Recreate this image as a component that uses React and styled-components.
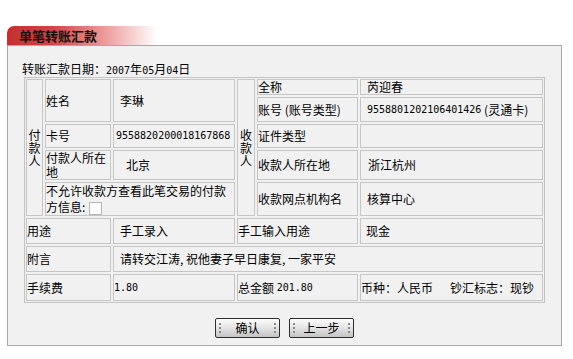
import React from "react";
import styled, { createGlobalStyle } from "styled-components";

const GlobalStyle = createGlobalStyle`
  body {
    margin: 0;
    background: #ffffff;
    font-family: "Noto Sans CJK SC", "Liberation Sans", sans-serif;
    font-size: 12px;
    color: #000;
  }
`;

const Page = styled.div`
  width: 555px;
  padding: 26px 0 0 7px;
`;

const Tab = styled.div`
  width: 150px;
  height: 19px;
  box-sizing: border-box;
  padding-left: 12px;
  border-top-left-radius: 7px;
  background: linear-gradient(90deg, #c62f2f 0%, #d54343 30%, #ec9a9a 65%, #ffffff 100%);
  font-size: 13px;
  font-weight: bold;
  line-height: 19px;
  color: #111;
`;

const Panel = styled.div`
  height: 301px;
  box-sizing: border-box;
  border: 1px solid #a9a9a9;
  background: #f1f1f1;
  padding: 15px 0 6px 0;
`;

const DateLine = styled.div`
  height: 16px;
  line-height: 16px;
  padding-left: 14px;
`;

const Num = styled.span`
  font-family: "DejaVu Sans Mono", "Liberation Mono", monospace;
  font-size: 10px;
`;

const Table = styled.div`
  display: grid;
  width: fit-content;
  margin-left: 16px;
  border: 1px solid #c3c3c3;
  padding: 1px;
  gap: 2px;
  grid-template-columns: 17px 66px 122px 18px 101px 183px;
  grid-template-rows: 16px 25px 24px 30px 34px 26px 26px 27px;
`;

const Cell = styled.div`
  grid-column: ${({ $col }) => $col};
  grid-row: ${({ $row }) => $row || "auto"};
  box-sizing: border-box;
  border: 1px solid #c6c6c6;
  display: flex;
  align-items: center;
  padding: 0 0 0 ${({ $pad }) => ($pad === undefined ? 0 : $pad)}px;
  line-height: 14px;
  white-space: ${({ $nowrap }) => ($nowrap ? "nowrap" : "normal")};
  overflow: hidden;
`;

const SideLabel = styled(Cell)`
  justify-content: center;
  text-align: center;
  padding: 0;
  line-height: 13px;
`;

const Notice = styled(Cell)`
  line-height: 16px;
`;

const Check = styled.span`
  display: inline-block;
  width: 13px;
  height: 13px;
  box-sizing: border-box;
  margin-left: 4px;
  vertical-align: -3px;
  background: #fff;
  border: 1px solid #b4b4b4;
`;

const Spacer = styled.span`
  display: inline-block;
  width: ${({ $w }) => $w}px;
`;

const ButtonRow = styled.div`
  display: flex;
  justify-content: center;
  gap: 9px;
  margin-top: 15px;
`;

const Button = styled.button`
  position: relative;
  width: 65px;
  height: 20px;
  padding: 0;
  border: 1px solid #2e2e2e;
  border-radius: 2px;
  background: linear-gradient(#fdfdfd 0%, #e6e6e6 45%, #c4c4c4 100%);
  font-family: "Noto Sans CJK SC", sans-serif;
  font-size: 12px;
  line-height: 18px;
  color: #000;

  &::before,
  &::after {
    content: "";
    position: absolute;
    top: 4px;
    width: 2px;
    height: 10px;
    background: repeating-linear-gradient(#8a8a8a 0 2px, transparent 2px 4px);
  }
  &::before { left: 3px; }
  &::after { right: 3px; }
`;

const App = () => {
  return (
    <>
      <GlobalStyle />
      <Page>
        <Tab>单笔转账汇款</Tab>
        <Panel>
          <DateLine>
            转账汇款日期：<Num>2007</Num>年<Num>05</Num>月<Num>04</Num>日
          </DateLine>
          <Table>
            <SideLabel $col="1" $row="1 / 6">付款人</SideLabel>
            <Cell $col="2" $row="1 / 3">姓名</Cell>
            <Cell $col="3" $row="1 / 3" $pad={6}>李琳</Cell>
            <SideLabel $col="4" $row="1 / 6">收款人</SideLabel>
            <Cell $col="5" $row="1">全称</Cell>
            <Cell $col="6" $row="1" $pad={6}>芮迎春</Cell>
            <Cell $col="5" $row="2" $nowrap>
              账号 (账号类型)
            </Cell>
            <Cell $col="6" $row="2" $pad={6} $nowrap>
              <Num>9558801202106401426</Num>&nbsp;(灵通卡)
            </Cell>

            <Cell $col="2" $row="3">卡号</Cell>
            <Cell $col="3" $row="3" $pad={2} $nowrap>
              <Num>9558820200018167868</Num>
            </Cell>
            <Cell $col="5" $row="3">证件类型</Cell>
            <Cell $col="6" $row="3" />

            <Cell $col="2" $row="4">付款人所在地</Cell>
            <Cell $col="3" $row="4" $pad={12}>北京</Cell>
            <Cell $col="5" $row="4">收款人所在地</Cell>
            <Cell $col="6" $row="4" $pad={7}>浙江杭州</Cell>

            <Notice $col="2 / 4" $row="5">
              <div>
                不允许收款方查看此笔交易的付款方信息:
                <Check />
              </div>
            </Notice>
            <Cell $col="5" $row="5">收款网点机构名</Cell>
            <Cell $col="6" $row="5" $pad={6}>核算中心</Cell>

            <Cell $col="1 / 3" $row="6">用途</Cell>
            <Cell $col="3" $row="6" $pad={6}>手工录入</Cell>
            <Cell $col="4 / 6" $row="6">手工输入用途</Cell>
            <Cell $col="6" $row="6" $pad={5}>现金</Cell>

            <Cell $col="1 / 3" $row="7">附言</Cell>
            <Cell $col="3 / 7" $row="7" $pad={6}>
              请转交江涛, 祝他妻子早日康复, 一家平安
            </Cell>

            <Cell $col="1 / 3" $row="8">手续费</Cell>
            <Cell $col="3" $row="8">
              <Num>1.80</Num>
            </Cell>
            <Cell $col="4 / 6" $row="8" $nowrap>
              总金额&nbsp;<Num>201.80</Num>
            </Cell>
            <Cell $col="6" $row="8" $nowrap>
              币种：人民币<Spacer $w={17} />钞汇标志：现钞
            </Cell>
          </Table>
          <ButtonRow>
            <Button>确认</Button>
            <Button>上一步</Button>
          </ButtonRow>
        </Panel>
      </Page>
    </>
  );
};

export default App;
